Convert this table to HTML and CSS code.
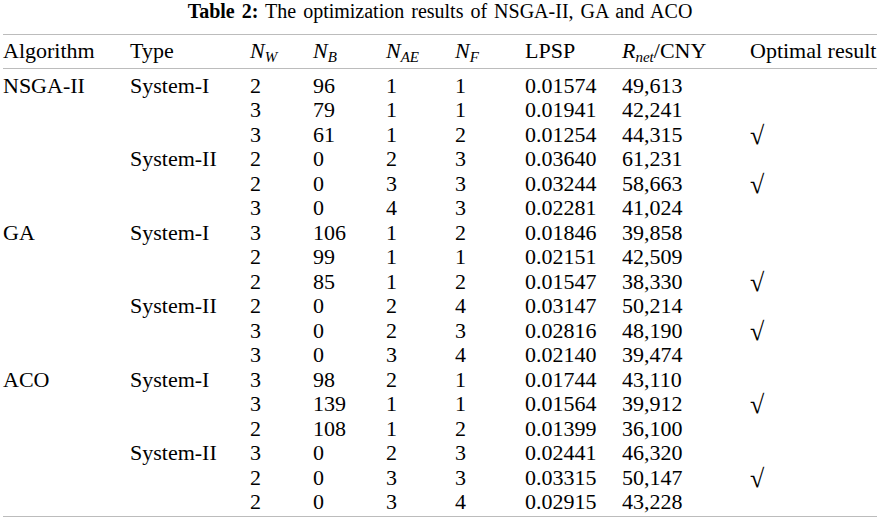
FILE: index.html
```html
<!DOCTYPE html>
<html>
<head>
<meta charset="utf-8">
<link rel="stylesheet" href="styles.css">
</head>
<body>
<div class="page">
  <div class="caption"><b>Table 2:</b> The optimization results of NSGA-II, GA and ACO</div>
  <table class="results">
    <colgroup>
      <col class="c1"><col class="c2"><col class="c3"><col class="c4"><col class="c5"><col class="c6"><col class="c7"><col class="c8"><col class="c9">
    </colgroup>
    <thead>
      <tr>
        <th>Algorithm</th>
        <th>Type</th>
        <th><i>N</i><sub>W</sub></th>
        <th><i>N</i><sub>B</sub></th>
        <th><i>N</i><sub>AE</sub></th>
        <th><i>N</i><sub>F</sub></th>
        <th>LPSP</th>
        <th><i>R</i><sub class="net">net</sub>/CNY</th>
        <th>Optimal result</th>
      </tr>
    </thead>
    <tbody>
      <tr><td>NSGA-II</td><td>System-I</td><td>2</td><td>96</td><td>1</td><td>1</td><td>0.01574</td><td>49,613</td><td></td></tr>
      <tr><td></td><td></td><td>3</td><td>79</td><td>1</td><td>1</td><td>0.01941</td><td>42,241</td><td></td></tr>
      <tr><td></td><td></td><td>3</td><td>61</td><td>1</td><td>2</td><td>0.01254</td><td>44,315</td><td><span class="check">√</span></td></tr>
      <tr><td></td><td>System-II</td><td>2</td><td>0</td><td>2</td><td>3</td><td>0.03640</td><td>61,231</td><td></td></tr>
      <tr><td></td><td></td><td>2</td><td>0</td><td>3</td><td>3</td><td>0.03244</td><td>58,663</td><td><span class="check">√</span></td></tr>
      <tr><td></td><td></td><td>3</td><td>0</td><td>4</td><td>3</td><td>0.02281</td><td>41,024</td><td></td></tr>
      <tr><td>GA</td><td>System-I</td><td>3</td><td>106</td><td>1</td><td>2</td><td>0.01846</td><td>39,858</td><td></td></tr>
      <tr><td></td><td></td><td>2</td><td>99</td><td>1</td><td>1</td><td>0.02151</td><td>42,509</td><td></td></tr>
      <tr><td></td><td></td><td>2</td><td>85</td><td>1</td><td>2</td><td>0.01547</td><td>38,330</td><td><span class="check">√</span></td></tr>
      <tr><td></td><td>System-II</td><td>2</td><td>0</td><td>2</td><td>4</td><td>0.03147</td><td>50,214</td><td></td></tr>
      <tr><td></td><td></td><td>3</td><td>0</td><td>2</td><td>3</td><td>0.02816</td><td>48,190</td><td><span class="check">√</span></td></tr>
      <tr><td></td><td></td><td>3</td><td>0</td><td>3</td><td>4</td><td>0.02140</td><td>39,474</td><td></td></tr>
      <tr><td>ACO</td><td>System-I</td><td>3</td><td>98</td><td>2</td><td>1</td><td>0.01744</td><td>43,110</td><td></td></tr>
      <tr><td></td><td></td><td>3</td><td>139</td><td>1</td><td>1</td><td>0.01564</td><td>39,912</td><td><span class="check">√</span></td></tr>
      <tr><td></td><td></td><td>2</td><td>108</td><td>1</td><td>2</td><td>0.01399</td><td>36,100</td><td></td></tr>
      <tr><td></td><td>System-II</td><td>3</td><td>0</td><td>2</td><td>3</td><td>0.02441</td><td>46,320</td><td></td></tr>
      <tr><td></td><td></td><td>2</td><td>0</td><td>3</td><td>3</td><td>0.03315</td><td>50,147</td><td><span class="check">√</span></td></tr>
      <tr><td></td><td></td><td>2</td><td>0</td><td>3</td><td>4</td><td>0.02915</td><td>43,228</td><td></td></tr>
    </tbody>
  </table>
</div>
</body>
</html>
```
FILE: styles.css
```css
html, body {
  margin: 0;
  padding: 0;
  background: #ffffff;
}
body {
  font-family: "Liberation Serif", "Times New Roman", serif;
  color: #000000;
}
.page {
  width: 880px;
  height: 518px;
  overflow: hidden;
}
.caption {
  text-align: center;
  font-size: 20px;
  line-height: 22px;
  height: 34px;
  word-spacing: 2px;
  box-sizing: border-box;
}
.caption b {
  font-weight: bold;
}
.results {
  margin-left: 3px;
  width: 874px;
  border-collapse: collapse;
  table-layout: fixed;
  font-size: 22px;
  line-height: 24.5px;
}
.c1 { width: 127px; }
.c2 { width: 120px; }
.c3 { width: 63px; }
.c4 { width: 73px; }
.c5 { width: 69px; }
.c6 { width: 70px; }
.c7 { width: 97px; }
.c8 { width: 128px; }
.c9 { width: 127px; }
.results th,
.results td {
  padding: 0;
  text-align: left;
  font-weight: normal;
  white-space: nowrap;
  vertical-align: baseline;
}
.results thead tr {
  border-top: 1px solid #bcbcbc;
  border-bottom: 1px solid #bcbcbc;
}
.results thead th {
  padding-top: 4px;
  padding-bottom: 4px;
}
.results tbody tr:first-child td {
  padding-top: 5px;
}
.results tbody tr:last-child td {
  padding-bottom: 1px;
}
.results tbody {
  border-bottom: 1px solid #bcbcbc;
}
.results sub {
  font-size: 15px;
  line-height: 0;
  vertical-align: -4px;
  font-style: italic;
}
.check {
  font-size: 26px;
  line-height: 0;
  position: relative;
  top: 2px;
}
```
